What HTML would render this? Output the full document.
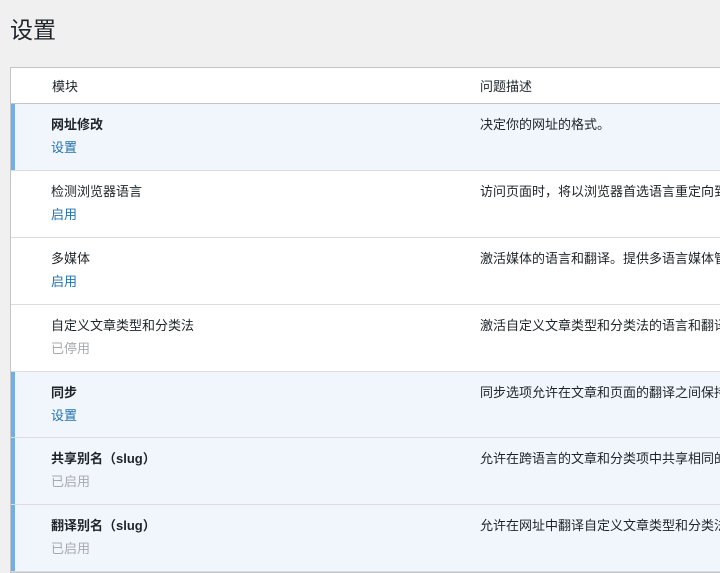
<!DOCTYPE html>
<html><head><meta charset="utf-8"><style>
html,body{margin:0;padding:0;width:720px;height:561px;overflow:hidden;background:#f0f0f1;font-family:"Liberation Sans","Noto Sans CJK SC",sans-serif;color:#1d2327;font-size:13px}
h1{position:absolute;left:10px;top:15px;margin:0;font-size:23px;font-weight:400;line-height:30px;color:#1d2327}
.tbl{position:absolute;left:10px;top:67px;width:760px;background:#fff;border:1px solid #c3c4c7;border-right:none}
.hd{height:35px;border-bottom:1px solid #c3c4c7;position:relative}
.hd span{position:absolute;top:10px;line-height:18px}
.row{height:66px;border-bottom:1px solid #dcdcde;position:relative;white-space:nowrap}
.row.s{height:65px}
.row.act{background:#f0f6fc}
.row.act:before{content:"";position:absolute;left:0;top:0;bottom:0;width:4px;background:#72aee6}
.t{position:absolute;left:40px;top:12px;line-height:18px}
.act .t{font-weight:700}
.l{position:absolute;left:40px;top:35px;line-height:18px;color:#2271b1}
.l.g{color:#a7aaad}
.d{position:absolute;left:469px;top:12px;line-height:18px}
</style></head><body>
<h1>设置</h1>
<div class="tbl">
<div class="hd"><span style="left:41px">模块</span><span style="left:469px">问题描述</span></div>
<div class="row act"><div class="t">网址修改</div><div class="l">设置</div><div class="d">决定你的网址的格式。</div></div>
<div class="row"><div class="t">检测浏览器语言</div><div class="l">启用</div><div class="d">访问页面时，将以浏览器首选语言重定向到首页</div></div>
<div class="row"><div class="t">多媒体</div><div class="l">启用</div><div class="d">激活媒体的语言和翻译。提供多语言媒体管理</div></div>
<div class="row"><div class="t">自定义文章类型和分类法</div><div class="l g">已停用</div><div class="d">激活自定义文章类型和分类法的语言和翻译</div></div>
<div class="row act s"><div class="t">同步</div><div class="l">设置</div><div class="d">同步选项允许在文章和页面的翻译之间保持</div></div>
<div class="row act"><div class="t">共享别名（slug）</div><div class="l g">已启用</div><div class="d">允许在跨语言的文章和分类项中共享相同的别名</div></div>
<div class="row act"><div class="t">翻译别名（slug）</div><div class="l g">已启用</div><div class="d">允许在网址中翻译自定义文章类型和分类法</div></div>
</div>
</body></html>
